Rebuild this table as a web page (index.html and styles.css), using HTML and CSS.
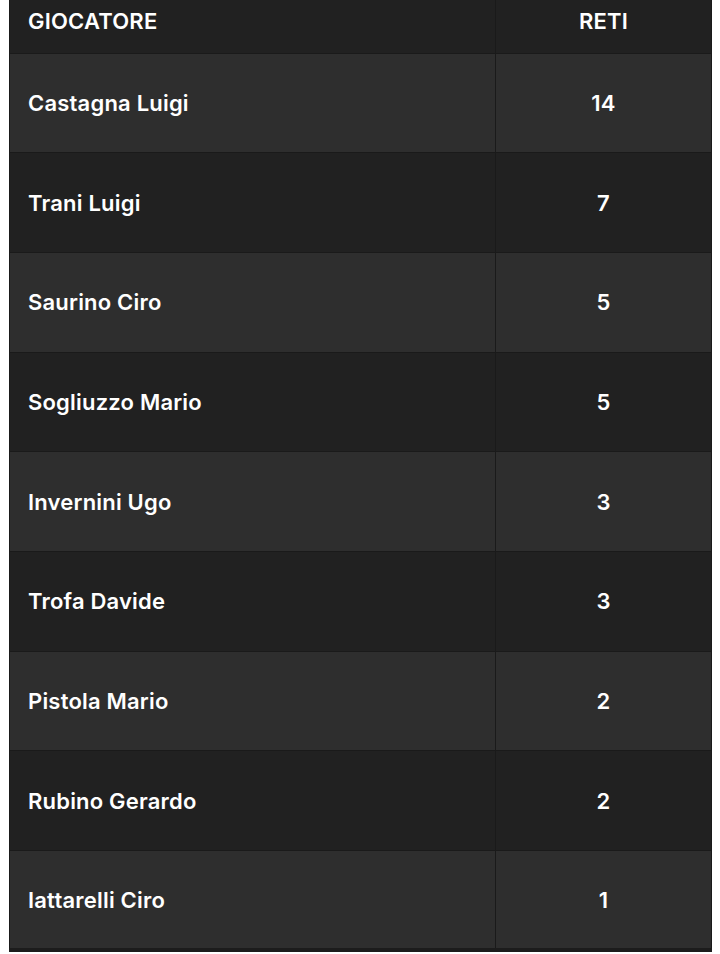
FILE: index.html
```html
<!DOCTYPE html>
<html lang="it">
<head>
<meta charset="utf-8">
<link rel="stylesheet" href="styles.css">
</head>
<body>
<table class="scorers">
  <thead>
    <tr><th class="name">GIOCATORE</th><th class="goals">RETI</th></tr>
  </thead>
  <tbody>
    <tr class="odd"><td class="name">Castagna Luigi</td><td class="goals">14</td></tr>
    <tr class="even"><td class="name">Trani Luigi</td><td class="goals">7</td></tr>
    <tr class="odd"><td class="name">Saurino Ciro</td><td class="goals">5</td></tr>
    <tr class="even"><td class="name">Sogliuzzo Mario</td><td class="goals">5</td></tr>
    <tr class="odd"><td class="name">Invernini Ugo</td><td class="goals">3</td></tr>
    <tr class="even"><td class="name">Trofa Davide</td><td class="goals">3</td></tr>
    <tr class="odd"><td class="name">Pistola Mario</td><td class="goals">2</td></tr>
    <tr class="even"><td class="name">Rubino Gerardo</td><td class="goals">2</td></tr>
    <tr class="odd"><td class="name">Iattarelli Ciro</td><td class="goals">1</td></tr>
  </tbody>
</table>
</body>
</html>
```
FILE: styles.css
```css
html, body {
  margin: 0;
  padding: 0;
  background: #ffffff;
}
body {
  padding-left: 9px;
  font-family: Inter, "Noto Sans", sans-serif;
}
.scorers {
  width: 703px;
  border-collapse: collapse;
  color: #ffffff;
  font-size: 22px;
  font-weight: 600;
  letter-spacing: 0.2px;
  border-left: 1px solid #1a1a1a;
  border-right: 1px solid #1a1a1a;
  border-bottom: 4px solid #1c1c1c;
}
.scorers th {
  background: #212121;
  height: 53px;
  padding: 0 18px 10px;
  box-sizing: border-box;
  text-align: left;
  font-weight: 600;
  border-bottom: 1px solid #1a1a1a;
}
.scorers td {
  height: 99.7px;
  padding: 0 18px;
  box-sizing: border-box;
  border-top: 1px solid #1a1a1a;
}
.scorers .goals {
  text-align: center;
  width: 216px;
  border-left: 1px solid #1a1a1a;
}
.odd td { background: #2e2e2e; }
.even td { background: #212121; }
```
